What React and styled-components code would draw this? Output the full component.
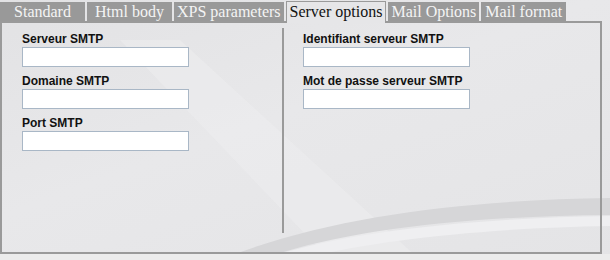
import React from "react";
import styled, { createGlobalStyle } from "styled-components";

const GlobalStyle = createGlobalStyle`
  html, body {
    margin: 0;
    padding: 0;
  }
  body {
    width: 610px;
    height: 260px;
    overflow: hidden;
    background: linear-gradient(160deg, #e2e2e4 0%, #e8e8ea 45%, #e4e4e6 100%);
    font-family: "Liberation Sans", Arial, sans-serif;
  }
`;

const Page = styled.div`
  position: relative;
  width: 610px;
  height: 260px;
`;

const Backdrop = styled.svg`
  position: absolute;
  left: 0;
  top: 0;
  width: 610px;
  height: 260px;
  pointer-events: none;
`;

const Layout = styled.div`
  position: relative;
  display: flex;
  flex-direction: column;
  width: 602px;
`;

const TabBar = styled.div`
  display: flex;
  align-items: flex-end;
  height: 21px;
`;

const Tab = styled.div`
  min-width: 85px;
  height: ${(p) => (p.$active ? "22px" : "19px")};
  box-sizing: border-box;
  padding: 0 3px;
  margin-right: 2px;
  margin-bottom: ${(p) => (p.$active ? "-2px" : "0")};
  background: ${(p) => (p.$active ? "#e6e6e8" : "#999999")};
  border: ${(p) => (p.$active ? "1px solid #9a9a9a" : "none")};
  border-bottom: none;
  color: ${(p) => (p.$active ? "#111" : "#f4f4f4")};
  font-family: "Liberation Serif", "Times New Roman", serif;
  font-size: 16px;
  line-height: ${(p) => (p.$active ? "20px" : "19px")};
  text-align: center;
  white-space: nowrap;
  position: relative;
  z-index: ${(p) => (p.$active ? 2 : 1)};
`;

const Panel = styled.div`
  height: 233px;
  box-sizing: border-box;
  border: 2px solid #9a9a9a;
  display: flex;
  padding-top: 5px;
`;

const Column = styled.div`
  width: ${(p) => p.$width}px;
  box-sizing: border-box;
  padding-left: ${(p) => p.$left}px;
  padding-top: 4px;
  display: flex;
  flex-direction: column;
`;

const Divider = styled.div`
  width: 2px;
  height: 205px;
  background: #9a9a9a;
`;

const Field = styled.div`
  display: flex;
  flex-direction: column;
  margin-bottom: 7px;
`;

const Label = styled.label`
  font-weight: bold;
  font-size: 12px;
  line-height: 14px;
  color: #111;
  margin-bottom: 1px;
`;

const Input = styled.input`
  width: 167px;
  height: 20px;
  box-sizing: border-box;
  border: 1px solid #a9b7c6;
  background: #fff;
  padding: 0 3px;
  margin: 0;
  outline: none;
`;

const tabs = [
  { name: "Standard" },
  { name: "Html body" },
  { name: "XPS parameters" },
  { name: "Server options", active: true },
  { name: "Mail Options" },
  { name: "Mail format" },
];

const left = ["Serveur SMTP", "Domaine SMTP", "Port SMTP"];
const right = ["Identifiant serveur SMTP", "Mot de passe serveur SMTP"];

export default function App() {
  return (
    <Page>
      <GlobalStyle />
      <Backdrop viewBox="0 0 610 260">
        <path d="M120 40 L330 260 L420 260 L180 40 Z" fill="#ececee" opacity="0.6" />
        <path d="M220 260 C330 215 470 200 610 198 L610 215 C470 216 340 230 260 260 Z" fill="#d6d6d8" />
        <path d="M260 260 C340 232 470 218 610 216 L610 226 C480 228 360 242 300 260 Z" fill="#efeff1" />
        <rect x="0" y="254" width="610" height="6" fill="#ececec" />
      </Backdrop>
      <Layout>
        <TabBar>
          {tabs.map((t) => (
            <Tab key={t.name} $active={t.active}>
              {t.name}
            </Tab>
          ))}
        </TabBar>
        <Panel>
          <Column $width={280} $left={20}>
            {left.map((l) => (
              <Field key={l}>
                <Label>{l}</Label>
                <Input type="text" />
              </Field>
            ))}
          </Column>
          <Divider />
          <Column $width={300} $left={19}>
            {right.map((l) => (
              <Field key={l}>
                <Label>{l}</Label>
                <Input type="text" />
              </Field>
            ))}
          </Column>
        </Panel>
      </Layout>
    </Page>
  );
}
